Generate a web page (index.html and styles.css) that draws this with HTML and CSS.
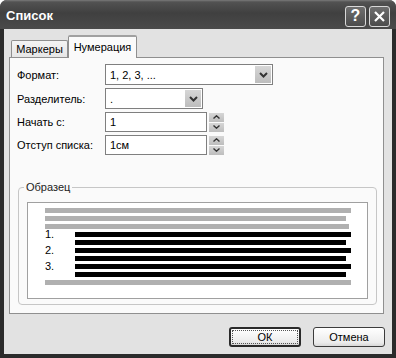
FILE: index.html
```html
<!DOCTYPE html>
<html>
<head>
<meta name="viewport" content="width=device-width, initial-scale=1">
<link rel="stylesheet" href="styles.css">
</head>
<body>
<div class="window">
  <div class="titlebar">
    <span class="title">Список</span>
    <div class="caption-buttons">
      <span class="cap-btn help">?</span>
      <span class="cap-btn">
        <svg width="13" height="13" viewBox="0 0 13 13"><path d="M2 2 L11 11 M11 2 L2 11" stroke="#fff" stroke-width="2.2" fill="none"/></svg>
      </span>
    </div>
  </div>

  <div class="client">
    <div class="tabs">
      <div class="tab">Маркеры</div>
      <div class="tab active">Нумерация</div>
    </div>

    <div class="panel">
      <div class="form">
        <label>Формат:</label>
        <div class="combo wide">
          <span class="value">1, 2, 3, ...</span>
          <span class="drop"><svg width="9" height="6" viewBox="0 0 9 6"><path d="M1 1 L4.5 4.5 L8 1" stroke="#333" stroke-width="2" fill="none"/></svg></span>
        </div>

        <label>Разделитель:</label>
        <div class="combo narrow">
          <span class="value">.</span>
          <span class="drop"><svg width="9" height="6" viewBox="0 0 9 6"><path d="M1 1 L4.5 4.5 L8 1" stroke="#333" stroke-width="2" fill="none"/></svg></span>
        </div>

        <label>Начать с:</label>
        <div class="spin-field">
          <div class="edit">1</div>
          <div class="spinner">
            <span class="spin-btn"><svg width="7" height="4" viewBox="0 0 7 4"><path d="M0.5 3.5 L3.5 0.8 L6.5 3.5" stroke="#333" stroke-width="1.4" fill="none"/></svg></span>
            <span class="spin-btn"><svg width="7" height="4" viewBox="0 0 7 4"><path d="M0.5 0.5 L3.5 3.2 L6.5 0.5" stroke="#333" stroke-width="1.4" fill="none"/></svg></span>
          </div>
        </div>

        <label>Отступ списка:</label>
        <div class="spin-field">
          <div class="edit">1см</div>
          <div class="spinner">
            <span class="spin-btn"><svg width="7" height="4" viewBox="0 0 7 4"><path d="M0.5 3.5 L3.5 0.8 L6.5 3.5" stroke="#333" stroke-width="1.4" fill="none"/></svg></span>
            <span class="spin-btn"><svg width="7" height="4" viewBox="0 0 7 4"><path d="M0.5 0.5 L3.5 3.2 L6.5 0.5" stroke="#333" stroke-width="1.4" fill="none"/></svg></span>
          </div>
        </div>
      </div>

      <fieldset class="sample">
        <legend>Образец</legend>
        <div class="preview">
          <div class="line gray full"></div>
          <div class="line gray short"></div>
          <div class="line gray mid"></div>
          <div class="item">
            <span class="num">1.</span>
            <div class="item-lines">
              <div class="line black full"></div>
              <div class="line black short"></div>
            </div>
          </div>
          <div class="item">
            <span class="num">2.</span>
            <div class="item-lines">
              <div class="line black full"></div>
              <div class="line black short"></div>
            </div>
          </div>
          <div class="item">
            <span class="num">3.</span>
            <div class="item-lines">
              <div class="line black full"></div>
              <div class="line black short"></div>
            </div>
          </div>
          <div class="line gray full"></div>
        </div>
      </fieldset>
    </div>

    <div class="buttons">
      <button class="btn default"><span class="focus">ОК</span></button>
      <button class="btn">Отмена</button>
    </div>
  </div>
</div>
</body>
</html>
```

FILE: styles.css
```css
body {
  margin: 0;
  font-family: "Liberation Sans", Arial, sans-serif;
  font-size: 11px;
  color: #000;
  background: #fff;
}

.window {
  width: 396px;
  height: 358px;
  box-sizing: border-box;
  display: flex;
  flex-direction: column;
  background: #2b2b2b;
  border-radius: 7px 7px 0 0;
  overflow: hidden;
}

.titlebar {
  height: 29px;
  flex: none;
  display: flex;
  align-items: center;
  justify-content: space-between;
  padding: 0 6px 0 6px;
  background: linear-gradient(#7a7a7a 0, #525252 2px, #404040 45%, #4a4a4a 100%);
}

.title {
  color: #fff;
  font-size: 13px;
  font-weight: bold;
  margin-top: 1px;
}

.caption-buttons {
  display: flex;
  gap: 3px;
  margin-top: 3px;
}

.cap-btn {
  width: 19px;
  height: 19px;
  border: 1px solid #d8d8d8;
  border-radius: 3px;
  background: linear-gradient(#6e6e6e, #4c4c4c);
  color: #fff;
  display: flex;
  align-items: center;
  justify-content: center;
}

.cap-btn.help {
  font-size: 16px;
  font-weight: bold;
}

.client {
  flex: 1;
  margin: 0 4px 4px 4px;
  background: #e2e2e2;
  padding: 6px 8px 0 5px;
  display: flex;
  flex-direction: column;
}

.tabs {
  height: 22px;
  display: flex;
  align-items: flex-end;
  padding-left: 2px;
}

.tab {
  width: 57px;
  height: 17px;
  box-sizing: border-box;
  border: 1px solid #8f8f8f;
  border-bottom: none;
  border-radius: 2px 2px 0 0;
  background: linear-gradient(#f4f4f4, #e6e6e6);
  display: flex;
  align-items: center;
  justify-content: center;
  white-space: nowrap;
}

.tab.active {
  width: 69px;
  height: 23px;
  padding-bottom: 2px;
  margin-bottom: -1px;
  background: #fafafa;
  border-top: 2px solid #a0a0a0;
  position: relative;
  z-index: 1;
}

.panel {
  height: 257px;
  box-sizing: border-box;
  border: 1px solid #8f8f8f;
  background: #fafafa;
  padding: 6px 6px 0 7px;
}

.form {
  display: grid;
  grid-template-columns: 88px auto;
  row-gap: 3px;
  align-items: center;
}

.combo {
  height: 21px;
  box-sizing: border-box;
  border: 1px solid #7f7f7f;
  background: #fff;
  display: flex;
  align-items: center;
  justify-content: space-between;
  padding: 0 1px 0 4px;
}

.combo.wide { width: 168px; }
.combo.narrow { width: 98px; }

.drop {
  width: 16px;
  height: 17px;
  background: linear-gradient(#d6d6d6, #bdbdbd);
  display: flex;
  align-items: center;
  justify-content: center;
}

.spin-field {
  display: flex;
  align-items: center;
  gap: 2px;
}

.edit {
  width: 102px;
  height: 20px;
  box-sizing: border-box;
  border: 1px solid #7f7f7f;
  background: #fff;
  padding-left: 4px;
  display: flex;
  align-items: center;
}

.spinner {
  display: flex;
  flex-direction: column;
  gap: 1px;
}

.spin-btn {
  width: 15px;
  height: 9px;
  background: linear-gradient(#d6d6d6, #bdbdbd);
  display: flex;
  align-items: center;
  justify-content: center;
}

.sample {
  margin: 26px 0 0 1px;
  border: 1px solid #c6c6c6;
  border-radius: 4px;
  padding: 9px 8px 5px 8px;
}

.sample legend {
  padding: 0 2px;
  margin-left: -3px;
  color: #222;
}

.preview {
  border: 1px solid #a0a0a0;
  background: #fff;
  padding: 5px 0 13px 17px;
}

.line {
  height: 5px;
  margin-bottom: 3px;
}

.line.gray { background: #b0b0b0; }
.line.black { background: #000; }

.preview > .line.full { width: 306px; }
.preview > .line.short { width: 301px; }
.preview > .line.mid { width: 304px; }
.preview > .line:last-child { margin-bottom: 0; }

.item {
  display: flex;
}

.num {
  width: 30px;
  font-size: 11px;
  line-height: 5px;
}

.item-lines .line.full { width: 276px; }
.item-lines .line.short { width: 271px; }

.buttons {
  display: flex;
  justify-content: flex-end;
  gap: 12px;
  margin-top: 13px;
  margin-right: -1px;
}

.btn {
  width: 72px;
  height: 20px;
  box-sizing: border-box;
  border: 1px solid #3c3c3c;
  border-radius: 3px;
  background: linear-gradient(#ffffff, #ececec 80%, #d8d8d8);
  font-family: "Liberation Sans", Arial, sans-serif;
  font-size: 11px;
  padding: 0;
  color: #000;
}

.btn.default {
  border: 2px solid #2a2a2a;
  padding: 1px;
}

.focus {
  display: flex;
  align-items: center;
  justify-content: center;
  height: 100%;
  border: 1px dotted #555;
  box-sizing: border-box;
}
```
